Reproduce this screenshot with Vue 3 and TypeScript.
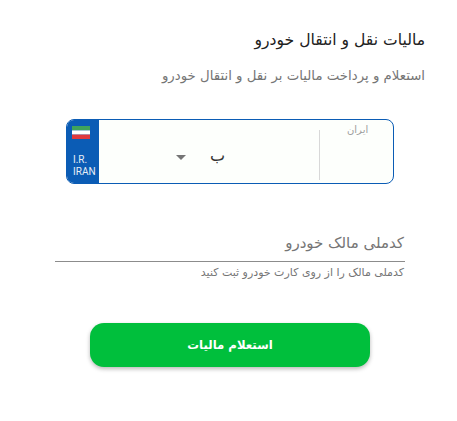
<script setup lang="ts">
const title = 'مالیات نقل و انتقال خودرو'
const subtitle = 'استعلام و پرداخت مالیات بر نقل و انتقال خودرو'
</script>

<template>
  <main class="page" dir="rtl">
    <header class="intro">
      <h1 class="title">{{ title }}</h1>
      <p class="subtitle">{{ subtitle }}</p>
    </header>

    <section class="plate" dir="ltr">
      <div class="band">
        <svg class="flag" viewBox="0 0 18 13" width="18" height="13" aria-hidden="true">
          <rect width="18" height="4.4" fill="#3fa35b" />
          <rect y="4.4" width="18" height="4.2" fill="#ffffff" />
          <rect y="8.6" width="18" height="4.4" fill="#e0393e" />
        </svg>
        <span class="band-text">I.R.<br />IRAN</span>
      </div>
      <div class="letter-area">
        <span class="arrow"></span>
        <span class="letter">ب</span>
      </div>
      <div class="region">
        <span class="region-label">ایران</span>
      </div>
    </section>

    <section class="field">
      <div class="field-label">کدملی مالک خودرو</div>
      <div class="field-hint">کدملی مالک را از روی کارت خودرو ثبت کنید</div>
    </section>

    <button class="submit" type="button">استعلام مالیات</button>
  </main>
</template>

<style>
html, body { margin: 0; background: #fff; }
</style>

<style scoped>
.page {
  width: 457px;
  height: 421px;
  box-sizing: border-box;
  padding: 30px 32px 0 35px;
  display: flex;
  flex-direction: column;
  align-items: center;
  font-family: "DejaVu Sans", sans-serif;
  overflow: hidden;
}
.intro { align-self: stretch; }
.title {
  margin: 0;
  font-size: 15.6px;
  line-height: 20px;
  font-weight: 500;
  color: #212121;
}
.subtitle {
  margin: 16px 0 0;
  font-size: 13.3px;
  line-height: 20px;
  color: #757575;
}
.plate {
  margin-top: 33px;
  width: 328px;
  height: 65px;
  flex: none;
  box-sizing: border-box;
  border: 1px solid #0b5cb5;
  border-radius: 8px;
  display: flex;
  background: #fdfffc;
  overflow: hidden;
}
.band {
  width: 32px;
  flex: none;
  background: #0b5cb5;
  color: #e8eef6;
  display: flex;
  flex-direction: column;
  align-items: flex-start;
  justify-content: space-between;
  padding: 6px 0 5px 5px;
  box-sizing: border-box;
  font-family: Roboto, sans-serif;
  font-size: 10px;
  line-height: 12px;
}
.band-text { margin-left: 1px; }
.letter-area {
  flex: 1;
  display: flex;
  align-items: center;
  padding: 10px 0 0 77px;
  gap: 24px;
  color: #333;
}
.arrow {
  width: 0;
  height: 0;
  margin-top: 1px;
  border-left: 5.5px solid transparent;
  border-right: 5.5px solid transparent;
  border-top: 5.5px solid #757575;
}
.letter { font-size: 16px; line-height: 20px; margin-top: -2px; }
.region {
  width: 73px;
  flex: none;
  margin: 10px 0 3px;
  border-left: 1px solid #d8d8d8;
  position: relative;
  text-align: center;
}
.region-label {
  position: absolute;
  top: -7px;
  left: 27px;
  font-size: 10px;
  line-height: 14px;
  color: #9e9e9e;
}
.field {
  margin-top: 47px;
  width: 350px;
}
.field-label {
  font-size: 15px;
  line-height: 20px;
  color: #757575;
  padding: 2px 1px 8px;
  border-bottom: 1px solid #8c8c8c;
}
.field-hint {
  margin-top: 4px;
  font-size: 11px;
  line-height: 14px;
  color: #757575;
  padding-right: 1px;
}
.submit {
  margin-top: 43px;
  width: 280px;
  height: 44px;
  flex: none;
  border: 0;
  border-radius: 14px;
  background: #00bf3c;
  color: #fff;
  font: 700 11.7px/20px "DejaVu Sans", sans-serif;
  box-shadow: 0 2px 4px rgba(0, 0, 0, 0.28);
}
</style>
